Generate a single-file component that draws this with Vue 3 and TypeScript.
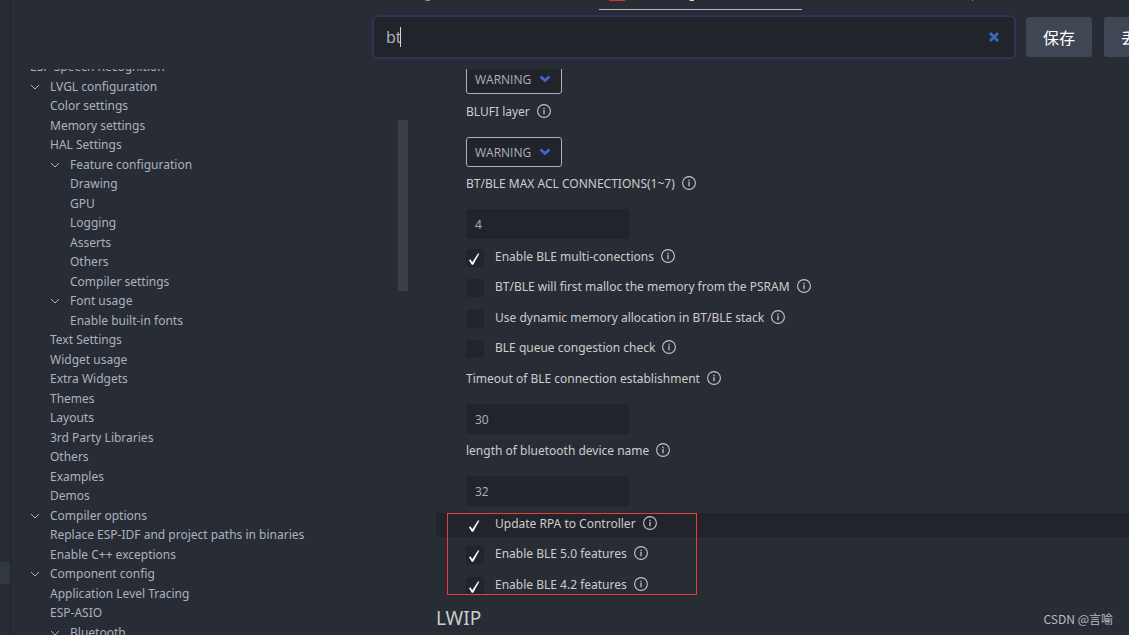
<script setup lang="ts">
import { reactive, ref } from 'vue'

interface TreeNode {
  label: string
  level: number
  open?: boolean
}

interface Setting {
  kind: 'select' | 'number' | 'check'
  label: string
  value?: string
  checked?: boolean
  active?: boolean
}

const query = ref('bt')

const tree: TreeNode[] = [
  { label: 'ESP Speech Recognition', level: 0 },
  { label: 'LVGL configuration', level: 0, open: true },
  { label: 'Color settings', level: 1 },
  { label: 'Memory settings', level: 1 },
  { label: 'HAL Settings', level: 1 },
  { label: 'Feature configuration', level: 1, open: true },
  { label: 'Drawing', level: 2 },
  { label: 'GPU', level: 2 },
  { label: 'Logging', level: 2 },
  { label: 'Asserts', level: 2 },
  { label: 'Others', level: 2 },
  { label: 'Compiler settings', level: 2 },
  { label: 'Font usage', level: 1, open: true },
  { label: 'Enable built-in fonts', level: 2 },
  { label: 'Text Settings', level: 1 },
  { label: 'Widget usage', level: 1 },
  { label: 'Extra Widgets', level: 1 },
  { label: 'Themes', level: 1 },
  { label: 'Layouts', level: 1 },
  { label: '3rd Party Libraries', level: 1 },
  { label: 'Others', level: 1 },
  { label: 'Examples', level: 1 },
  { label: 'Demos', level: 1 },
  { label: 'Compiler options', level: 0, open: true },
  { label: 'Replace ESP-IDF and project paths in binaries', level: 1 },
  { label: 'Enable C++ exceptions', level: 1 },
  { label: 'Component config', level: 0, open: true },
  { label: 'Application Level Tracing', level: 1 },
  { label: 'ESP-ASIO', level: 1 },
  { label: 'Bluetooth', level: 1, open: true },
]

const settings = reactive<Setting[]>([
  { kind: 'select', label: 'BTIF layer', value: 'WARNING' },
  { kind: 'select', label: 'BLUFI layer', value: 'WARNING' },
  { kind: 'number', label: 'BT/BLE MAX ACL CONNECTIONS(1~7)', value: '4' },
  { kind: 'check', label: 'Enable BLE multi-conections', checked: true },
  { kind: 'check', label: 'BT/BLE will first malloc the memory from the PSRAM', checked: false },
  { kind: 'check', label: 'Use dynamic memory allocation in BT/BLE stack', checked: false },
  { kind: 'check', label: 'BLE queue congestion check', checked: false },
  { kind: 'number', label: 'Timeout of BLE connection establishment', value: '30' },
  { kind: 'number', label: 'length of bluetooth device name', value: '32' },
  { kind: 'check', label: 'Update RPA to Controller', checked: true, active: true },
  { kind: 'check', label: 'Enable BLE 5.0 features', checked: true },
  { kind: 'check', label: 'Enable BLE 4.2 features', checked: true },
])
</script>

<template>
  <div class="window">
    <div class="activity"><div class="activity-mark"></div></div>
    <div class="editor">
      <div class="tabs">
        <svg class="tab-edge" width="8" height="2" aria-hidden="true"><path d="M2 0h5v1H3z" fill="#8b8d91" /></svg>
        <div class="tab">
          <svg width="203" height="9" aria-hidden="true">
            <path d="M10 0h16v1H10z" fill="#c9392b" />
            <path d="M90 0h5v1h-4z" fill="#d0d3d8" />
          </svg>
        </div>
        <svg class="tab-end" width="3" height="2" aria-hidden="true"><path d="M1 0h1v1H1z" fill="#8b8d91" /></svg>
      </div>

      <header class="toolbar">
        <div class="search">
          <input v-model="query" class="search-input" type="text" aria-label="Search parameter" />
          <span class="caret"></span>
          <button class="clear" aria-label="Clear search" @click="query = ''">
            <svg width="12" height="12" viewBox="0 0 12 12"><path d="M2 2l8 8M10 2l-8 8" stroke="#3569b5" stroke-width="3" fill="none" /></svg>
          </button>
        </div>
        <button class="action">保存</button>
        <button class="action last">丢弃</button>
      </header>

      <div class="body">
        <nav class="sidebar">
          <ul class="tree">
            <li v-for="(n, i) in tree" :key="i" class="node" :class="'level-' + n.level">
              <svg v-if="n.open" class="twisty" width="10" height="10" viewBox="0 0 10 10" aria-hidden="true">
                <path d="M1 3l4 4 4-4" fill="none" stroke="#abb2bf" />
              </svg>
              <span>{{ n.label }}</span>
            </li>
          </ul>
          <div class="thumb"></div>
        </nav>

        <main class="content">
          <div class="settings">
            <div v-for="(s, i) in settings" :key="i" class="setting" :class="[s.kind, { active: s.active }]">
              <input v-if="s.kind === 'check'" :id="'s' + i" v-model="s.checked" class="box" type="checkbox" />
              <svg v-if="s.checked" class="tick" width="18" height="18" viewBox="0 0 18 18" aria-hidden="true">
                <path d="M3 11.2l1.4-.9 1.8 3L12 4.5h1.4L7.2 15.8H5.8z" fill="#fff" />
              </svg>
              <div class="caption">
                <label :for="'s' + i">{{ s.label }}</label>
                <svg class="info" width="14" height="14" viewBox="0 0 14 14" aria-hidden="true">
                  <circle cx="7" cy="7" r="6.4" fill="none" stroke="#c2c4c8" stroke-width="1.1" />
                  <path d="M6.3 3.8h1.4v1.4H6.3zM6.3 6h1.4v4.2H6.3z" fill="#b4b7bb" />
                </svg>
              </div>
              <div v-if="s.kind === 'select'" class="select-wrap">
                <select :id="'s' + i" v-model="s.value" class="dropdown">
                  <option>WARNING</option>
                </select>
                <svg class="arrow" width="12" height="8" viewBox="0 0 12 8" aria-hidden="true">
                  <path d="M1.5 1.5L6 5.5l4.5-4" fill="none" stroke="#4a63d0" stroke-width="2.6" />
                </svg>
              </div>
              <input v-if="s.kind === 'number'" :id="'s' + i" v-model="s.value" class="number-input" type="text" />
            </div>
          </div>
          <h2 class="section">LWIP</h2>
          <div class="marker"></div>
          <div class="credit">CSDN @言喻</div>
        </main>
      </div>
    </div>
  </div>
</template>

<style>
html,
body {
  margin: 0;
  background: #282c34;
}
</style>

<style scoped>
* {
  box-sizing: border-box;
}

.window {
  display: flex;
  height: 100vh;
  overflow: hidden;
  background: #282c34;
  color: #abb2bf;
  font: 12px/20px "Noto Sans", "Noto Sans CJK SC", sans-serif;
}

.activity {
  flex: 0 0 11px;
  padding-top: 562px;
  border-right: 1px solid #20242a;
}

.activity-mark {
  height: 22px;
  background: #323842;
}

.editor {
  flex: 1;
  min-width: 0;
  display: flex;
  flex-direction: column;
}

.tabs {
  flex: 0 0 10px;
  display: flex;
  align-items: flex-start;
  padding-left: 412px;
}

.tab {
  display: flex;
  margin-left: 168px;
  border-bottom: 1px solid #b4b7bb;
}

.tab-end {
  margin-left: 169px;
}

.toolbar {
  flex: 0 0 59px;
  display: flex;
  align-items: flex-start;
  padding: 5px 0 0 361px;
}

.search {
  position: relative;
  flex: 1;
  min-width: 0;
  height: 44px;
  display: flex;
  align-items: center;
  padding-right: 14px;
  border: 2px solid #2c3558;
  border-radius: 6px;
  background: #21252b;
}

.search-input {
  flex: 1;
  min-width: 0;
  height: 40px;
  padding: 0 12px;
  border: 0;
  outline: 0;
  background: transparent;
  color: #b4b7bb;
  caret-color: transparent;
  font: 16px/24px "Open Sans", sans-serif;
}

.caret {
  position: absolute;
  left: 26px;
  top: 10px;
  width: 1px;
  height: 20px;
  background: #d0d3d8;
}

.clear {
  display: flex;
  padding: 0;
  border: 0;
  background: transparent;
}

.action {
  flex: 0 0 66px;
  height: 40px;
  margin: 2px 0 0 10px;
  padding: 0;
  border: 0;
  border-radius: 3px;
  background: #404754;
  color: #fff;
  font: 16px/24px "Noto Sans CJK SC", sans-serif;
}

.last {
  margin-right: -41px;
  margin-left: 12px;
}

.body {
  flex: 1;
  min-height: 0;
  display: flex;
}

.sidebar {
  flex: 0 0 397px;
  display: flex;
  justify-content: space-between;
  overflow: hidden;
}

.tree {
  display: grid;
  grid-auto-rows: 20px 19px;
  align-items: start;
  margin: -12px 0 0;
  padding: 0 0 0 19px;
  list-style: none;
}

.node {
  display: flex;
  align-items: center;
  white-space: nowrap;
}

.twisty {
  margin-right: 10px;
}

.level-1 {
  padding-left: 20px;
}

.level-2 {
  padding-left: 40px;
}

.thumb {
  width: 10px;
  height: 171px;
  margin-top: 51px;
  background: #3a3f49;
}

.content {
  position: relative;
  flex: 1;
  min-width: 0;
  display: flex;
  flex-direction: column;
  overflow: hidden;
  padding-left: 28px;
}

.settings {
  flex: none;
  height: 567px;
  margin-top: -41px;
  overflow: hidden;
}

.setting {
  position: relative;
  padding-left: 30px;
  color: #ccc;
}

.setting:nth-child(odd) {
  padding-bottom: 1px;
}

.select,
.number {
  display: flex;
  flex-direction: column;
  align-items: flex-start;
  gap: 16px;
  margin-bottom: 6px;
}

.check {
  display: flex;
  align-items: flex-start;
  gap: 11px;
  margin-bottom: 6px;
  height: 24px;
}

.check:nth-child(odd) {
  height: 25px;
}

.active {
  background: #21252b;
}

.box {
  appearance: none;
  width: 18px;
  height: 18px;
  margin: 3px 0 0;
  border-radius: 3px;
  background: #21252b;
}

.tick {
  position: absolute;
  left: 30px;
  top: 3px;
  pointer-events: none;
}

.caption {
  display: flex;
  align-items: center;
  gap: 7px;
  height: 20px;
  white-space: nowrap;
}

.caption label {
  padding-top: 2px;
}

.select-wrap {
  position: relative;
  width: 96px;
}

.dropdown {
  appearance: none;
  display: block;
  width: 100%;
  height: 30px;
  padding: 1px 8px 0;
  border: 1px solid #abb2bf;
  border-radius: 3px;
  background: #21252b;
  color: #abb2bf;
  font: 12px/20px "Open Sans", sans-serif;
}

.arrow {
  position: absolute;
  right: 11px;
  top: 11px;
  pointer-events: none;
}

.number-input {
  width: 163px;
  height: 30px;
  padding: 0 9px;
  border: 0;
  border-radius: 2px;
  outline: 0;
  background: #21252b;
  color: #abb2bf;
  font: 12px/20px "Open Sans", sans-serif;
}

.section {
  margin: 9px 0 0;
  color: #ccc;
  font-size: 19px;
  font-weight: 400;
  line-height: 28px;
}

.marker {
  position: absolute;
  left: 39px;
  top: 444px;
  width: 250px;
  height: 82px;
  border: 1px solid #f23a35;
  pointer-events: none;
}

.credit {
  position: absolute;
  right: 16px;
  bottom: 6px;
  color: #b9bbbf;
  font: 12px/20px "Noto Sans CJK SC", sans-serif;
}
</style>
